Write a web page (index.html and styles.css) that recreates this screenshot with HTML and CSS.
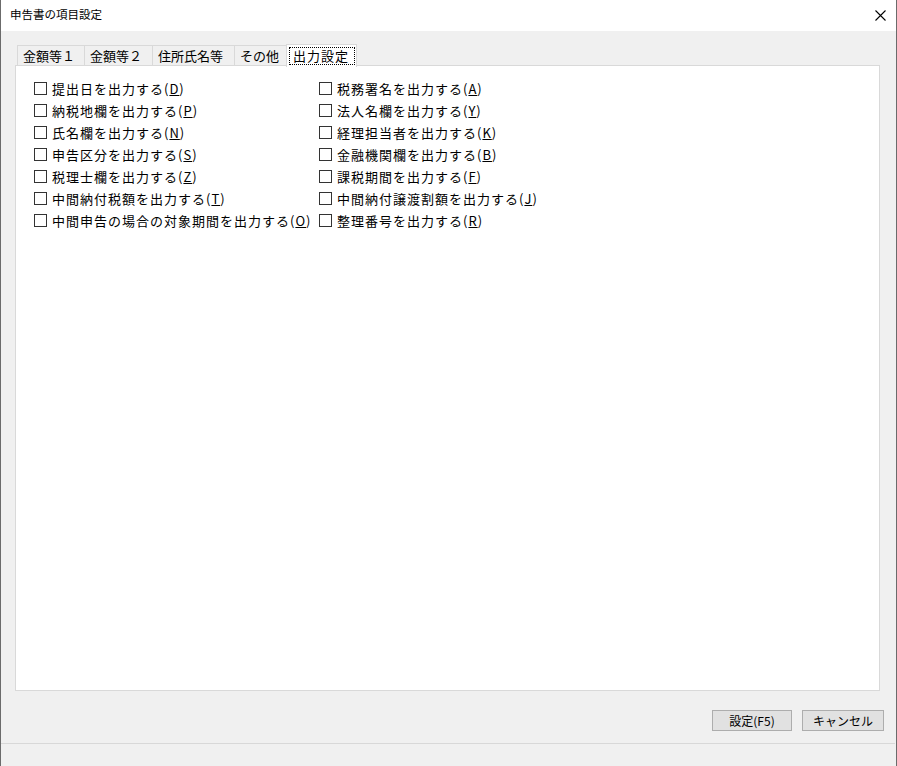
FILE: index.html
```html
<!DOCTYPE html>
<html lang="ja">
<head>
    <meta charset="UTF-8">
    <title>申告書の項目設定</title>
    <link rel="stylesheet" href="styles.css">
</head>
<body>
    <div class="window">
        <div class="titlebar">
            <span class="title">申告書の項目設定</span>
            <svg class="close" width="11" height="11" viewBox="0 0 11 11">
                <path d="M0.5 0.5 L10.5 10.5 M10.5 0.5 L0.5 10.5" stroke="#000" stroke-width="1.1" fill="none"/>
            </svg>
        </div>

        <div class="body">
            <div class="tabs">
                <div class="tab t1">金額等１</div>
                <div class="tab t2">金額等２</div>
                <div class="tab t3">住所氏名等</div>
                <div class="tab t4">その他</div>
                <div class="tab active"><span class="focus">出力設定</span></div>
            </div>

            <div class="panel">
                <div class="options">
                    <label class="opt"><span class="box"></span>提出日を出力する(<u>D</u>)</label>
                    <label class="opt"><span class="box"></span>税務署名を出力する(<u>A</u>)</label>
                    <label class="opt"><span class="box"></span>納税地欄を出力する(<u>P</u>)</label>
                    <label class="opt"><span class="box"></span>法人名欄を出力する(<u>Y</u>)</label>
                    <label class="opt"><span class="box"></span>氏名欄を出力する(<u>N</u>)</label>
                    <label class="opt"><span class="box"></span>経理担当者を出力する(<u>K</u>)</label>
                    <label class="opt"><span class="box"></span>申告区分を出力する(<u>S</u>)</label>
                    <label class="opt"><span class="box"></span>金融機関欄を出力する(<u>B</u>)</label>
                    <label class="opt"><span class="box"></span>税理士欄を出力する(<u>Z</u>)</label>
                    <label class="opt"><span class="box"></span>課税期間を出力する(<u>F</u>)</label>
                    <label class="opt"><span class="box"></span>中間納付税額を出力する(<u>T</u>)</label>
                    <label class="opt"><span class="box"></span>中間納付譲渡割額を出力する(<u>J</u>)</label>
                    <label class="opt"><span class="box"></span>中間申告の場合の対象期間を出力する(<u>O</u>)</label>
                    <label class="opt"><span class="box"></span>整理番号を出力する(<u>R</u>)</label>
                </div>
            </div>

            <div class="buttons">
                <button class="btn ok">設定(F5)</button>
                <button class="btn">キャンセル</button>
            </div>
        </div>

        <div class="statusbar"></div>
    </div>
</body>
</html>
```

FILE: styles.css
```css
body {
    margin: 0;
    background: #f0f0f0;
    font-family: "Noto Sans CJK JP", "DejaVu Sans", sans-serif;
    color: #000;
}
.window {
    width: 895px;
    height: 766px;
    border-left: 1px solid #6b6b6b;
    border-right: 1px solid #6b6b6b;
    background: #f0f0f0;
    display: flex;
    flex-direction: column;
}
.titlebar {
    height: 31px;
    background: #fff;
    display: flex;
    align-items: center;
    justify-content: space-between;
    padding: 0 10px 0 9px;
    flex-shrink: 0;
}
.title {
    font-size: 11.5px;
    line-height: 1;
    margin-top: -1px;
}
.body {
    flex: 1;
    padding: 13px 16px 0 14px;
    display: flex;
    flex-direction: column;
}
.tabs {
    display: flex;
    align-items: flex-end;
    height: 21px;
    padding-left: 2px;
    position: relative;
    z-index: 1;
}
.tab {
    box-sizing: border-box;
    height: 20px;
    border: 1px solid #d9d9d9;
    border-bottom: none;
    border-right: none;
    background: #f0f0f0;
    font-size: 13px;
    line-height: 19px;
    padding-left: 5px;
    white-space: nowrap;
}
.t1 { width: 67px; }
.t2 { width: 68px; }
.t3 { width: 82px; }
.t4 { width: 53px; }
.tab.active {
    width: 71px;
    height: 23px;
    margin-left: -1px;
    margin-bottom: -2px;
    border-right: 1px solid #d9d9d9;
    background: #fff;
    padding: 2px 0 0 2px;
    line-height: 16px;
}
.focus {
    display: inline-block;
    box-sizing: border-box;
    width: 66px;
    height: 18px;
    border: 1px dotted #000;
    padding-left: 3px;
    letter-spacing: 1px;
}
.panel {
    box-sizing: border-box;
    height: 626px;
    background: #fff;
    border: 1px solid #d9d9d9;
    padding: 11px 0 0 18px;
    flex-shrink: 0;
}
.options {
    display: grid;
    grid-template-columns: 285px auto;
    grid-auto-rows: 22px;
}
.opt {
    display: flex;
    align-items: center;
    font-size: 13px;
    letter-spacing: 1px;
    white-space: nowrap;
}
.opt u {
    text-underline-offset: 1px;
}
.box {
    width: 11px;
    height: 11px;
    border: 1px solid #333;
    background: #fff;
    margin-right: 5px;
    flex-shrink: 0;
}
.buttons {
    display: flex;
    justify-content: flex-end;
    gap: 10px;
    margin-top: 19px;
    margin-right: -4px;
}
.btn {
    width: 82px;
    height: 21px;
    background: #e1e1e1;
    border: 1px solid #adadad;
    font-family: "Noto Sans CJK JP", sans-serif;
    font-size: 12px;
    line-height: 1;
    padding: 0;
    color: #000;
}
.btn.ok {
    width: 80px;
}
.statusbar {
    height: 22px;
    border-top: 1px solid #d8d8d8;
    margin-top: auto;
    margin-right: 1px;
}
```
